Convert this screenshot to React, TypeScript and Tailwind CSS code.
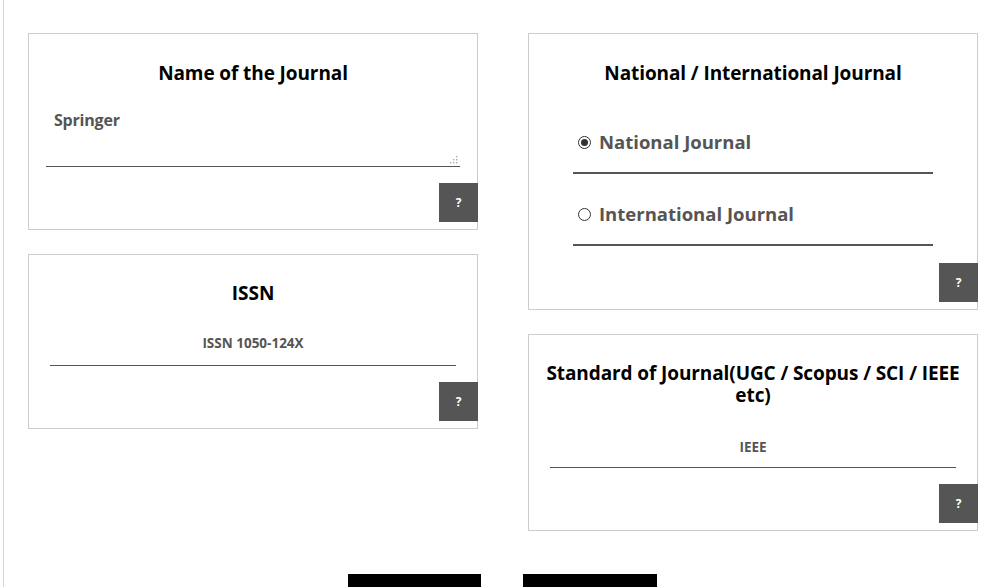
import React from "react";

const font = { fontFamily: '"Open Sans", "Noto Sans", Arial, sans-serif' };

function Help() {
  return (
    <button className="w-[39px] h-[39px] bg-[#555555] text-white text-[12px] font-bold flex items-center justify-center">
      ?
    </button>
  );
}

function Card({ className, children }: { className: string; children: React.ReactNode }) {
  return (
    <div className={"border border-[#cccccc] bg-white flex flex-col " + className}>{children}</div>
  );
}

export default function App() {
  return (
    <div className="w-[998px] h-[587px] overflow-hidden bg-white relative" style={font}>
      <div className="flex h-full">
        <div className="w-[3px] shrink-0" />
        <div className="w-px bg-[#d6d6d6] shrink-0" />
        <div className="flex flex-col pl-[24px] pt-[33px]">
          <div className="flex gap-[50px]">
            {/* left column */}
            <div className="w-[450px] flex flex-col gap-[24px]">
              <Card className="h-[197px]">
                <h2 className="text-[19px] font-bold text-black text-center pt-[26px] leading-[26px] tracking-[-0.1px]">
                  Name of the Journal
                </h2>
                <div className="mx-[17px] mt-[16px] h-[65px] border-b border-[#555] relative">
                  <div className="pl-[8px] pt-[6px] text-[16px] font-bold text-[#555] tracking-[-0.2px]">Springer</div>
                  <svg className="absolute right-[2px] bottom-[2px]" width="8" height="8" viewBox="0 0 8 8">
                    <rect x="6" y="0" width="1.4" height="1.4" fill="#aaa" />
                    <rect x="3" y="3" width="1.4" height="1.4" fill="#aaa" />
                    <rect x="6" y="3" width="1.4" height="1.4" fill="#aaa" />
                    <rect x="0" y="6" width="1.4" height="1.4" fill="#aaa" />
                    <rect x="3" y="6" width="1.4" height="1.4" fill="#aaa" />
                    <rect x="6" y="6" width="1.4" height="1.4" fill="#aaa" />
                  </svg>
                </div>
                <div className="mt-auto mb-[7px] self-end -mr-px">
                  <Help />
                </div>
              </Card>
              <Card className="h-[175px]">
                <h2 className="text-[19px] font-bold text-black text-center pt-[25px] leading-[26px]">ISSN</h2>
                <div className="mx-[21px] mt-[28px] border-b border-[#555] text-center text-[13.5px] font-bold text-[#555] pb-[13px] leading-[18px]">
                  ISSN 1050-124X
                </div>
                <div className="mt-auto mb-[7px] self-end -mr-px">
                  <Help />
                </div>
              </Card>
            </div>
            {/* right column */}
            <div className="w-[450px] flex flex-col gap-[24px]">
              <Card className="h-[277px]">
                <h2 className="text-[19px] font-bold text-black text-center pt-[26px] leading-[26px] tracking-[-0.1px]">
                  National / International Journal
                </h2>
                <div className="mx-[44px] mt-[45px] h-[43px] border-b-2 border-[#555] flex items-start gap-[8px] pl-[5px]">
                  <span className="mt-[5px] w-[13px] h-[13px] rounded-full border border-[#333] flex items-center justify-center">
                    <span className="w-[7px] h-[7px] rounded-full bg-[#333]" />
                  </span>
                  <span className="text-[18.5px] font-bold text-[#555] leading-[22px]">National Journal</span>
                </div>
                <div className="mx-[44px] mt-[29px] h-[43px] border-b-2 border-[#555] flex items-start gap-[8px] pl-[5px]">
                  <span className="mt-[5px] w-[13px] h-[13px] rounded-full border border-[#333]" />
                  <span className="text-[18.5px] font-bold text-[#555] leading-[22px]">International Journal</span>
                </div>
                <div className="mt-auto mb-[7px] self-end -mr-px">
                  <Help />
                </div>
              </Card>
              <Card className="h-[197px]">
                <h2 className="text-[19px] font-bold text-black text-center pt-[27px] leading-[22px] px-[14px] tracking-[-0.1px]">
                  Standard of Journal(UGC / Scopus / SCI / IEEE etc)
                </h2>
                <div className="mx-[21px] mt-[32px] border-b border-[#555] text-center text-[13.5px] font-bold text-[#555] pb-[11px] leading-[18px]">
                  IEEE
                </div>
                <div className="mt-auto mb-[7px] self-end -mr-px">
                  <Help />
                </div>
              </Card>
            </div>
          </div>
          <div className="flex gap-[42px] pl-[320px] mt-[43px]">
            <div className="w-[133px] h-[20px] bg-black" />
            <div className="w-[134px] h-[20px] bg-black" />
          </div>
        </div>
      </div>
    </div>
  );
}
